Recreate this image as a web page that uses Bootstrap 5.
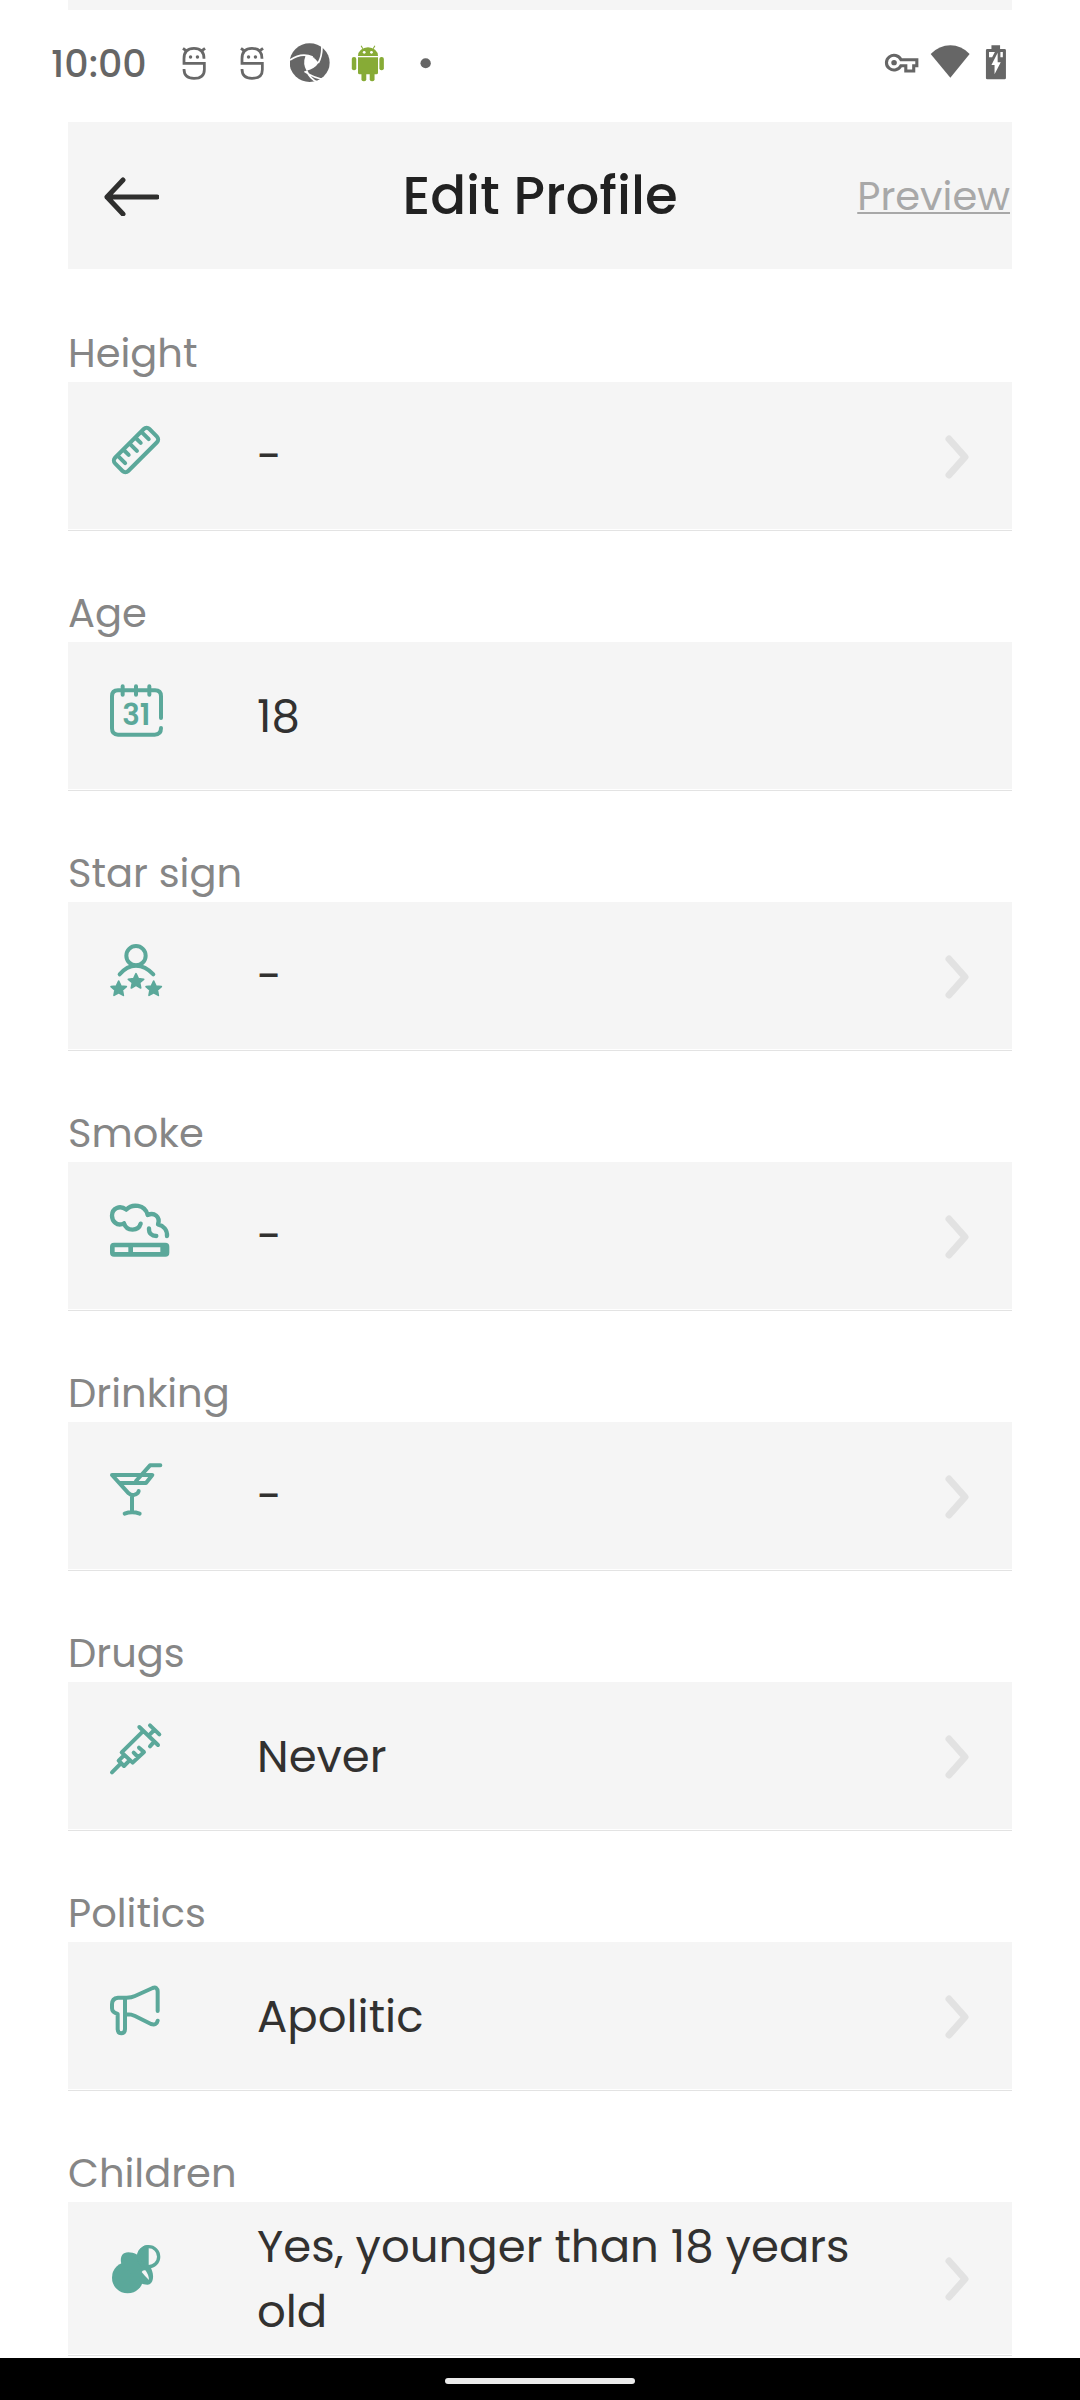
<!DOCTYPE html>
<html lang="en">
<head>
<meta charset="utf-8">
<meta name="viewport" content="width=device-width, initial-scale=1">
<title>Edit Profile</title>
<link rel="stylesheet" href="https://cdn.jsdelivr.net/npm/bootstrap@5.3.0/dist/css/bootstrap.min.css">
<style>
  body { font-family: Poppins, Inter, "Open Sans", sans-serif; color: #323130; background: #fff; }
  .page-inset { margin-left: 68px; margin-right: 68px; }
  .panel { background: #f5f5f5; }
  .scroll-edge { height: 10px; }
  .status { height: 108px; margin-bottom: 4px; padding-left: 51px; padding-right: 62px; color: #666; }
  .clock { width: 123px; font-size: 38px; font-weight: 500; line-height: 44px; }
  .status svg { width: 40px; height: 44px; }
  .notices { gap: 18px; }
  .title-bar { display: grid; grid-template-columns: 1fr auto 1fr; height: 147px; }
  .title-bar h1 { font-size: 53px; font-weight: 500; line-height: 64px; color: #212121; }
  .back { margin-left: 35px; color: #2f2f2e; }
  .preview { margin-right: 2px; font-size: 40px; line-height: 56px; color: #a8a8a8; text-decoration-skip-ink: none; text-decoration-thickness: 2px; text-underline-offset: 2px; }
  .fields { padding-top: 58px; padding-bottom: 2px; gap: 56px; }
  .field-name { font-size: 40px; line-height: 53px; padding-bottom: 2px; color: #868686; }
  .field-line { padding-bottom: 1px; border-bottom: 1px solid #e3e3e3; }
  .field-box { min-height: 147px; padding: 12px 43px 10px 22px; color: inherit; }
  .field-icon { width: 100px; height: 100px; margin-top: 6px; margin-right: 67px; fill: none; stroke: #5ba89a; stroke-width: 12; stroke-linecap: round; stroke-linejoin: round; }
  .field-icon .solid { fill: #5ba89a; }
  .field-icon text { fill: #5ba89a; stroke: none; font-size: 88px; font-weight: 600; }
  .field-value { font-size: 45px; line-height: 65px; min-width: 0; margin-right: 52px; }
  input.field-value { background: none; color: inherit; outline: 0; }
  .chevron { width: 24px; height: 44px; fill: none; stroke: #e2e2e2; stroke-width: 7; stroke-linecap: round; stroke-linejoin: round; }
  .gesture { height: 42px; }
  .gesture span { width: 190px; height: 6px; margin-top: 4px; background: #ebebeb; }
</style>
<script src="https://cdn.jsdelivr.net/npm/bootstrap@5.3.0/dist/js/bootstrap.bundle.min.js"></script>
</head>
<body>
<svg width="0" height="0" class="position-absolute" aria-hidden="true">
  <symbol id="mug" viewBox="505 125 116 132" preserveAspectRatio="none">
    <g fill="none" stroke="#686868" stroke-width="8">
      <path d="M592 175C592 155 582 144 563 144S534 155 534 175V189H593V208C593 225 583 234 563 234C545 234 534 225 534 206"/>
      <path d="M531 144L543 153M595 144L583 153"/>
    </g>
    <circle cx="553" cy="170" r="5" fill="#686868"/><circle cx="573" cy="170" r="5" fill="#686868"/>
  </symbol>
  <symbol id="next" viewBox="0 0 24 44"><path d="M4 4L20 22L4 40"/></symbol>
  <symbol id="star" viewBox="-30 -30 60 60"><path fill="#5ba89a" stroke-width="5" d="M0-24L7-9L23-7L11 3L14 19L0 11L-14 19L-11 3L-23-7L-7-9Z"/></symbol>
</svg>

<div class="d-flex flex-column min-vh-100">
  <div class="scroll-edge panel page-inset"></div>

  <div class="status d-flex align-items-center justify-content-between">
    <div class="d-flex align-items-center">
      <time class="clock">10:00</time>
      <div class="notices d-flex align-items-center">
        <svg><use href="#mug"/></svg>
        <svg><use href="#mug"/></svg>
        <svg viewBox="842 125 116 132" preserveAspectRatio="none">
          <circle cx="899" cy="187" r="58" fill="#666"/>
          <path fill="#fff" d="M887 166Q908 164 925 187Q914 205 890 211Q878 190 887 166Z"/>
          <path fill="none" stroke="#fff" stroke-width="5" d="M842 179Q875 155 908 170M934 131Q937 165 924 188M890 211Q900 236 922 246M884 213Q915 236 945 237"/>
        </svg>
        <svg viewBox="1011 125 116 132" preserveAspectRatio="none" fill="#87ab36">
          <path d="M1040 167a29 26 0 0 1 58 0z"/>
          <path stroke="#87ab36" stroke-width="3" d="M1054 145L1049 136M1084 145L1089 136"/>
          <path d="M1040 171h58v46a5 5 0 0 1-5 5h-48a5 5 0 0 1-5-5z"/>
          <rect x="1022" y="170" width="13" height="40" rx="6"/><rect x="1102" y="170" width="13" height="40" rx="6"/>
          <rect x="1050" y="212" width="14" height="31" rx="6"/><rect x="1074" y="212" width="14" height="31" rx="6"/>
          <circle cx="1058" cy="156" r="4" fill="#fff"/><circle cx="1079" cy="156" r="4" fill="#fff"/>
        </svg>
        <svg viewBox="1179 125 116 132" preserveAspectRatio="none"><circle cx="1236" cy="189" r="15" fill="#666"/></svg>
      </div>
    </div>
    <div class="d-flex align-items-center gap-2">
      <svg viewBox="993 125 116 132" preserveAspectRatio="none">
        <path fill="none" stroke="#666" stroke-width="9" d="M1048 178H1094V196H1085V212H1062V196H1048A22 22 0 1 1 1048 178Z"/>
        <circle cx="1028" cy="187" r="8" fill="#666"/>
      </svg>
      <svg viewBox="1133 125 116 132" preserveAspectRatio="none"><path fill="#666" d="M1192 232L1135 161Q1160 135 1192 135T1248 161Z"/></svg>
      <svg viewBox="1272 125 116 132" preserveAspectRatio="none">
        <path fill="#666" d="M1311 135h25v11h13a4 4 0 0 1 4 4v83a4 4 0 0 1-4 4h-50a4 4 0 0 1-4-4v-83a4 4 0 0 1 4-4h12z"/>
        <path fill="#fff" d="M1329 157L1311 194H1320V222L1338 186H1329ZM1304 155H1321L1313 171H1304ZM1337 155h7v16h-7z"/>
      </svg>
    </div>
  </div>

  <header class="title-bar panel page-inset align-items-center">
    <button type="button" class="back btn p-0 border-0 d-flex" aria-label="Back">
      <svg viewBox="0 0 56 40" width="56" height="40" fill="none" stroke="currentColor" stroke-width="5" stroke-linecap="round" stroke-linejoin="round"><path d="M54 21H4M20 4L4 21L20 38"/></svg>
    </button>
    <h1 class="m-0">Edit Profile</h1>
    <a href="#" class="preview text-end">Preview</a>
  </header>

  <main class="fields page-inset d-flex flex-column">
    <div>
      <label class="field-name d-block" for="height">Height</label>
      <div class="field-line">
        <button type="button" id="height" class="field-box panel w-100 border-0 d-flex align-items-center text-start">
          <svg class="field-icon flex-shrink-0 align-self-start" viewBox="0 0 300 300"><g transform="translate(138 150) rotate(-45)"><rect x="-73" y="-28" width="146" height="56" rx="12"/><path d="M-51-26V5M-26-26V-5M0-26V4M25-26V-5M50-26V4"/></g></svg>
          <span class="field-value flex-fill">-</span>
          <svg class="chevron flex-shrink-0"><use href="#next"/></svg>
        </button>
      </div>
    </div>

    <div>
      <label class="field-name d-block" for="age">Age</label>
      <div class="field-line">
        <div class="field-box panel d-flex align-items-center">
          <svg class="field-icon flex-shrink-0 align-self-start" viewBox="0 0 300 300"><path d="M213 174V109Q213 91 195 91H84Q66 91 66 109V205Q66 224 84 224H194Q213 224 213 204M98 79V104M138 79V104M178 79V104"/><text x="139" y="195" text-anchor="middle">31</text></svg>
          <input id="age" class="field-value flex-fill border-0 p-0" type="text" value="18" readonly>
        </div>
      </div>
    </div>

    <div>
      <label class="field-name d-block" for="sign">Star sign</label>
      <div class="field-line">
        <button type="button" id="sign" class="field-box panel w-100 border-0 d-flex align-items-center text-start">
          <svg class="field-icon flex-shrink-0 align-self-start" viewBox="0 0 300 300"><circle cx="138" cy="107" r="29"/><path d="M89 163Q110 137 138 137T190 163"/><use href="#star" x="56" y="177" width="60" height="60"/><use href="#star" x="108" y="155" width="60" height="60"/><use href="#star" x="161" y="177" width="60" height="60"/></svg>
          <span class="field-value flex-fill">-</span>
          <svg class="chevron flex-shrink-0"><use href="#next"/></svg>
        </button>
      </div>
    </div>

    <div>
      <label class="field-name d-block" for="smoke">Smoke</label>
      <div class="field-line">
        <button type="button" id="smoke" class="field-box panel w-100 border-0 d-flex align-items-center text-start">
          <svg class="field-icon flex-shrink-0 align-self-start" viewBox="0 0 300 300"><rect x="67" y="195" width="164" height="28" rx="5" stroke-width="14"/><path stroke-width="14" d="M122 198V220M218 200V218"/><path stroke-width="13" d="M102 130C80 141 66 122 66 107C66 84 90 74 109 89C125 71 165 72 173 105C192 96 212 110 204 133C220 137 232 150 231 168M102 130C110 155 145 155 152 131M177 145C176 160 185 168 199 168"/></svg>
          <span class="field-value flex-fill">-</span>
          <svg class="chevron flex-shrink-0"><use href="#next"/></svg>
        </button>
      </div>
    </div>

    <div>
      <label class="field-name d-block" for="drinking">Drinking</label>
      <div class="field-line">
        <button type="button" id="drinking" class="field-box panel w-100 border-0 d-flex align-items-center text-start">
          <svg class="field-icon flex-shrink-0 align-self-start" viewBox="0 0 300 300"><path d="M90 129H168L187 105H66L116 160Q126 169 137 163Q145 160 146 153M126 167V216M104 221Q126 213 149 221M138 123L180 76H211"/></svg>
          <span class="field-value flex-fill">-</span>
          <svg class="chevron flex-shrink-0"><use href="#next"/></svg>
        </button>
      </div>
    </div>

    <div>
      <label class="field-name d-block" for="drugs">Drugs</label>
      <div class="field-line">
        <button type="button" id="drugs" class="field-box panel w-100 border-0 d-flex align-items-center text-start">
          <svg class="field-icon flex-shrink-0 align-self-start" viewBox="0 0 300 300"><path d="M66 217L89 194M102 166L86 182L102 198L118 182M180 76L208 103M193 90L176 107M148 81L204 135M180 139L190 128M158 95L95 157L128 188L162 156L147 143M131 158L144 171"/></svg>
          <span class="field-value flex-fill">Never</span>
          <svg class="chevron flex-shrink-0"><use href="#next"/></svg>
        </button>
      </div>
    </div>

    <div>
      <label class="field-name d-block" for="politics">Politics</label>
      <div class="field-line">
        <button type="button" id="politics" class="field-box panel w-100 border-0 d-flex align-items-center text-start">
          <svg class="field-icon flex-shrink-0 align-self-start" viewBox="0 0 300 300"><path d="M203 153V95Q202 79 188 84L135 108Q125 113 110 113H84Q66 115 66 133V145Q66 157 83 162V208Q84 220 94 220Q105 219 105 208V113M110 163Q125 163 135 168L183 192Q200 197 203 182"/></svg>
          <span class="field-value flex-fill">Apolitic</span>
          <svg class="chevron flex-shrink-0"><use href="#next"/></svg>
        </button>
      </div>
    </div>

    <div>
      <label class="field-name d-block" for="children">Children</label>
      <div class="field-line">
        <button type="button" id="children" class="field-box panel w-100 border-0 d-flex align-items-center text-start">
          <svg class="field-icon flex-shrink-0 align-self-start" viewBox="0 0 300 300"><g stroke="none"><circle class="solid" cx="113" cy="173" r="47"/><path class="solid" d="M94 132C86 96 112 90 142 104L182 142C195 168 190 195 172 194Q160 194 152 190Z"/><path class="solid" d="M176 75A35 35 0 0 0 176 145Z"/><path fill="#f5f5f5" d="M155 156Q158 149 166 151Q176 163 177 180Q166 170 155 156Z"/></g><circle cx="176" cy="110" r="30" stroke-width="10"/></svg>
          <span class="field-value flex-fill">Yes, younger than 18 years old</span>
          <svg class="chevron flex-shrink-0"><use href="#next"/></svg>
        </button>
      </div>
    </div>
  </main>

  <footer class="gesture bg-black d-flex align-items-center justify-content-center mt-auto"><span class="rounded-pill"></span></footer>
</div>
</body>
</html>
